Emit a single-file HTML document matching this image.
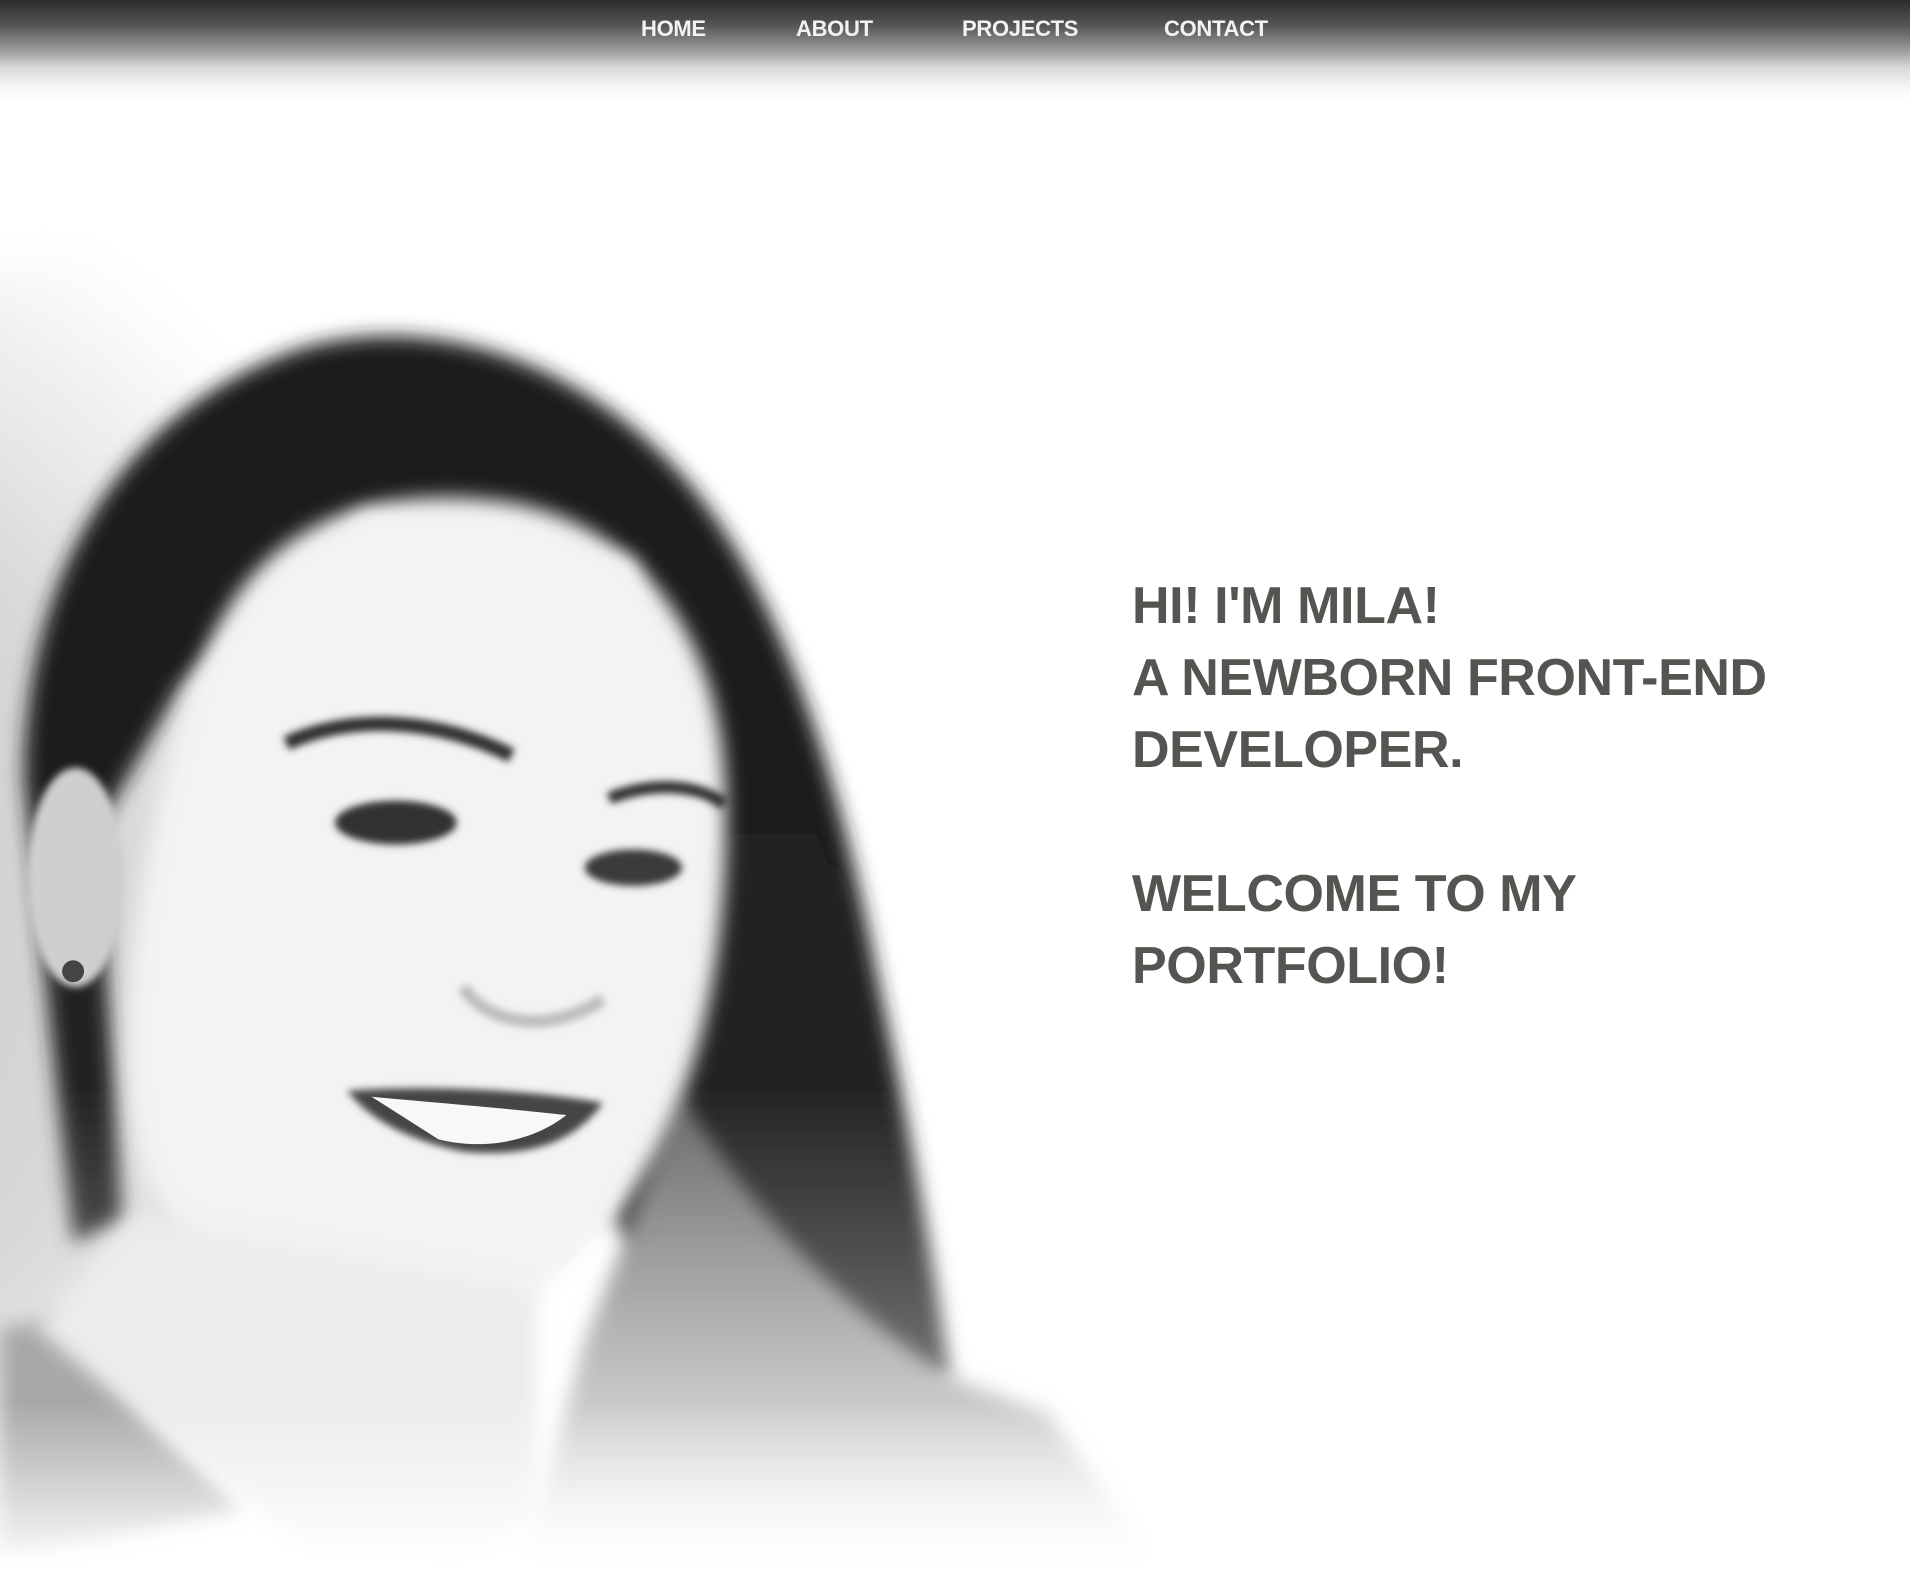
<!DOCTYPE html>
<html><head><meta charset="utf-8">
<style>
html,body{margin:0;padding:0;background:#fff;}
body{width:1910px;height:1572px;position:relative;overflow:hidden;font-family:"Liberation Sans",Arial,sans-serif;}
.hdr{position:absolute;left:0;top:0;width:1910px;height:100px;background:linear-gradient(#2b2b2b 0%,#555 25%,#9a9a9a 50%,#d9d9d9 68%,#f3f3f3 85%,#fff 100%);z-index:2;}
.nav{position:absolute;top:16px;font-size:22px;font-weight:bold;color:#f2f2f2;z-index:3;letter-spacing:-0.3px;}
.photo{position:absolute;left:0;top:0;width:1910px;height:1572px;z-index:1;}
.txt{position:absolute;left:1132px;top:570px;font-size:52px;line-height:72px;font-weight:bold;color:#545450;z-index:3;letter-spacing:-0.4px;}
</style></head><body>
<div class="hdr"></div>
<div class="nav" style="left:641px">HOME</div>
<div class="nav" style="left:796px">ABOUT</div>
<div class="nav" style="left:962px">PROJECTS</div>
<div class="nav" style="left:1164px">CONTACT</div>
<svg class="photo" viewBox="0 0 1568 1290" preserveAspectRatio="none">
<defs>
<filter id="b20" filterUnits="userSpaceOnUse" x="-200" y="-200" width="2000" height="1700"><feGaussianBlur stdDeviation="20"/></filter>
<filter id="b8" filterUnits="userSpaceOnUse" x="-200" y="-200" width="2000" height="1700"><feGaussianBlur stdDeviation="8"/></filter>
<filter id="b3" filterUnits="userSpaceOnUse" x="-200" y="-200" width="2000" height="1700"><feGaussianBlur stdDeviation="3"/></filter>
<radialGradient id="bg" cx="0.1" cy="0.5" r="0.6">
<stop offset="0" stop-color="#c4c4c4"/><stop offset="0.6" stop-color="#d8d8d8"/><stop offset="1" stop-color="#fff"/></radialGradient>
<linearGradient id="fade" x1="0" y1="0" x2="0" y2="1">
<stop offset="0" stop-color="#fff" stop-opacity="0"/><stop offset="1" stop-color="#fff" stop-opacity="1"/></linearGradient>
<linearGradient id="hairg" gradientUnits="userSpaceOnUse" x1="0" y1="280" x2="0" y2="1150">
<stop offset="0" stop-color="#1a1a1a"/><stop offset="0.7" stop-color="#222"/><stop offset="1" stop-color="#777"/></linearGradient>
<linearGradient id="shirt" gradientUnits="userSpaceOnUse" x1="0" y1="900" x2="0" y2="1285">
<stop offset="0" stop-color="#6a6a6a"/><stop offset="0.5" stop-color="#b5b5b5"/><stop offset="1" stop-color="#f5f5f5"/></linearGradient>
</defs>
<ellipse cx="150" cy="760" rx="560" ry="560" fill="url(#bg)" filter="url(#b20)"/>
<path d="M20 640 C20 460 110 330 250 285 C360 255 480 300 560 390 C640 480 690 640 720 800 C750 940 770 1060 780 1130 L700 1150 L600 1100 L500 1000 L560 700 L520 460 L300 420 L150 560 L80 680 L100 1000 L60 1020 Z" fill="url(#hairg)" filter="url(#b8)"/>
<path d="M560 900 C620 1000 700 1080 780 1130 L860 1160 L950 1285 L430 1285 L480 1100 Z" fill="url(#shirt)" filter="url(#b8)"/>
<path d="M0 1090 L60 1080 L120 1160 L200 1240 L0 1280 Z" fill="#a8a8a8" filter="url(#b8)"/>
<path d="M160 560 C200 430 300 400 400 410 C520 420 590 520 595 640 C600 760 580 880 530 960 C480 1040 420 1090 350 1100 C250 1110 170 1060 120 960 C90 880 110 700 160 560 Z" fill="#f3f3f3" filter="url(#b8)"/>
<path d="M110 1000 L440 1060 L440 1250 L380 1280 L250 1270 L160 1200 L30 1090 Z" fill="#ececec" filter="url(#b8)"/>
<ellipse cx="62" cy="720" rx="40" ry="90" fill="#cfcfcf" filter="url(#b3)"/>
<circle cx="60" cy="797" r="9" fill="#444"/>
<path d="M235 610 C290 585 360 590 420 620" stroke="#333" stroke-width="12" fill="none" filter="url(#b3)"/>
<path d="M500 655 C540 640 575 645 595 660" stroke="#333" stroke-width="10" fill="none" filter="url(#b3)"/>
<ellipse cx="325" cy="675" rx="50" ry="18" fill="#333" filter="url(#b3)"/>
<ellipse cx="520" cy="712" rx="40" ry="15" fill="#3a3a3a" filter="url(#b3)"/>
<path d="M380 810 C400 840 450 850 495 820" stroke="#bbb" stroke-width="10" fill="none" filter="url(#b3)"/>
<path d="M285 895 C360 890 440 895 495 905 C470 940 430 950 380 945 C330 935 300 915 285 895 Z" fill="#444" filter="url(#b3)"/>
<path d="M305 900 C360 905 420 910 465 915 C440 935 400 945 360 935 Z" fill="#f8f8f8"/>
<rect x="0" y="1150" width="1000" height="140" fill="url(#fade)"/>
</svg>
<div class="txt">HI! I'M MILA!<br>A NEWBORN FRONT-END<br>DEVELOPER.<br><br>WELCOME TO MY<br>PORTFOLIO!</div>
</body></html>
